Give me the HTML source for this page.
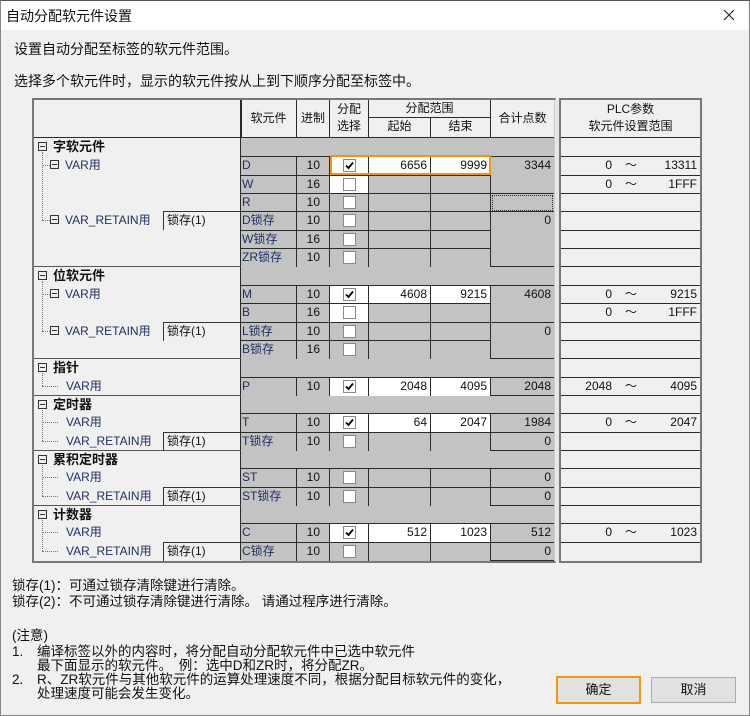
<!DOCTYPE html>
<html><head><meta charset="utf-8"><style>
*{margin:0;padding:0;box-sizing:border-box}
body{width:750px;height:716px;background:#f0f0f0;font-family:"Liberation Sans","Noto Sans CJK SC",sans-serif;font-size:12px;color:#111;position:relative;overflow:hidden}
.a{position:absolute;white-space:nowrap}
.r{position:absolute;left:241px;width:250px;height:19px}
.r span{position:absolute;top:0;height:19px;border-top:1px solid #2a2a2a;border-right:1px solid #2a2a2a;line-height:17px;background:#c3c3c3}
.l{left:0;width:56px;padding-left:1px;color:#203060}
.x{left:56px;width:33px;text-align:right;padding-right:9px}
.k{left:89px;width:39px}
.s{left:128px;width:62px;text-align:right;padding-right:3px}
.e{left:190px;width:60px;text-align:right;padding-right:3px}
.r span.w{background:#fff}
.cb{position:absolute;left:13px;top:2px;width:13px;height:13px;background:#fff;border:1px solid #888}
.cb svg{position:absolute;left:1px;top:1px}
.g{position:absolute;left:241px;width:313px;height:19px;background:#c3c3c3;border-top:1px solid #2a2a2a}
.t{position:absolute;left:491px;width:63px;background:#c3c3c3;border-top:1px solid #2a2a2a;text-align:right;padding-right:3px;line-height:17px}
.p{position:absolute;left:561px;width:139px;height:19px;border-top:1px solid #2a2a2a;line-height:17px}
.p b{font-weight:normal;position:absolute}
.gl{position:absolute;left:34px;width:207px;height:1px;background:#555}
.gh{position:absolute;left:38px;font-weight:bold;font-size:13px;line-height:18px}
.bx{display:inline-block;width:9px;height:9px;border:1px solid #333;position:relative;margin-right:6px;vertical-align:0}
.bx:after{content:"";position:absolute;left:1px;right:1px;top:3px;height:1px;background:#333}
.sub{position:absolute;color:#203060;line-height:18px}
.lk{position:absolute;left:163px;width:79px;height:19px;border-left:1px solid #333;border-top:1px solid #333;padding-left:3px;line-height:17px}
.vd{position:absolute;border-left:1px dotted #777}
.hd{position:absolute;border-top:1px dotted #777;width:10px}
.hc{position:absolute;top:100px;border-right:1px solid #2a2a2a;text-align:center;line-height:17px;background:#f0f0f0}
</style></head><body>
<div class="a" style="left:0;top:0;width:750px;height:716px;border:1px solid #888;border-top:1px solid #555"></div>
<div class="a" style="left:1px;top:1px;width:747px;height:29px;background:#fff"></div>
<div class="a" style="left:6px;top:6px;font-size:14px">自动分配软元件设置</div>
<svg class="a" style="left:723px;top:9px" width="12" height="12"><path d="M1 1L11 11M11 1L1 11" stroke="#222" stroke-width="1.1"/></svg>
<div class="a" style="left:14px;top:39px;font-size:14px">设置自动分配至标签的软元件范围。</div>
<div class="a" style="left:14px;top:71px;font-size:14px">选择多个软元件时，显示的软元件按从上到下顺序分配至标签中。</div>

<div class="a" style="left:32px;top:98px;width:524px;height:465px;border:2px solid #777;border-right:1px solid #bbb;border-bottom:2px solid #777"></div>
<div class="a" style="left:34px;top:100px;width:207px;height:460px;border-right:1px solid #2a2a2a"></div>
<div class="a" style="left:34px;top:137px;width:520px;height:1px;background:#2a2a2a"></div>
<div class="hc" style="left:241px;width:56px;height:37px;line-height:37px">软元件</div>
<div class="hc" style="left:297px;width:33px;height:37px;line-height:37px">进制</div>
<div class="hc" style="left:330px;width:39px;height:37px;padding-top:1px">分配<br>选择</div>
<div class="hc" style="left:369px;width:122px;height:18px;border-bottom:1px solid #2a2a2a">分配范围</div>
<div class="hc" style="left:369px;top:118px;width:62px;height:19px">起始</div>
<div class="hc" style="left:431px;top:118px;width:60px;height:19px">结束</div>
<div class="hc" style="left:491px;width:63px;height:37px;line-height:37px;border-right:none">合计点数</div>
<div class="a" style="left:241px;top:100px;width:1px;height:37px;background:#2a2a2a"></div>
<div class="a" style="left:554px;top:100px;width:6px;height:461px;background:#e6e6e6;border-left:1px solid #ccc"></div>

<div class="a" style="left:559px;top:98px;width:143px;height:465px;border:2px solid #777;border-bottom:2px solid #777"></div>
<div class="a" style="left:561px;top:100px;width:139px;height:37px;text-align:center;line-height:17px;padding-top:1px">PLC参数<br>软元件设置范围</div>

<div class="g" style="top:137px"></div>
<div class="g" style="top:266px"></div>
<div class="g" style="top:358px"></div>
<div class="g" style="top:395px"></div>
<div class="g" style="top:450px"></div>
<div class="g" style="top:505px"></div>
<div class="a" style="left:241px;top:560px;width:313px;height:1px;background:#2a2a2a"></div>

<div class="r" style="top:156px"><span class="l">D</span><span class="x">10</span><span class="k w"><i class="cb"><svg width="9" height="9"><path d="M1 4.5L3.5 7L8 1.5" stroke="#000" stroke-width="1.8" fill="none"/></svg></i></span><span class="s w">6656</span><span class="e w">9999</span></div>
<div class="r" style="top:175px"><span class="l">W</span><span class="x">16</span><span class="k w"><i class="cb"></i></span><span class="s"></span><span class="e"></span></div>
<div class="r" style="top:193px"><span class="l">R</span><span class="x">10</span><span class="k"><i class="cb"></i></span><span class="s"></span><span class="e"></span></div>
<div class="r" style="top:211px"><span class="l">D锁存</span><span class="x">10</span><span class="k"><i class="cb"></i></span><span class="s"></span><span class="e"></span></div>
<div class="r" style="top:230px"><span class="l">W锁存</span><span class="x">16</span><span class="k"><i class="cb"></i></span><span class="s"></span><span class="e"></span></div>
<div class="r" style="top:248px"><span class="l">ZR锁存</span><span class="x">10</span><span class="k"><i class="cb"></i></span><span class="s"></span><span class="e"></span></div>
<div class="r" style="top:285px"><span class="l">M</span><span class="x">10</span><span class="k w"><i class="cb"><svg width="9" height="9"><path d="M1 4.5L3.5 7L8 1.5" stroke="#000" stroke-width="1.8" fill="none"/></svg></i></span><span class="s w">4608</span><span class="e w">9215</span></div>
<div class="r" style="top:303px"><span class="l">B</span><span class="x">16</span><span class="k w"><i class="cb"></i></span><span class="s"></span><span class="e"></span></div>
<div class="r" style="top:322px"><span class="l">L锁存</span><span class="x">10</span><span class="k"><i class="cb"></i></span><span class="s"></span><span class="e"></span></div>
<div class="r" style="top:340px"><span class="l">B锁存</span><span class="x">16</span><span class="k"><i class="cb"></i></span><span class="s"></span><span class="e"></span></div>
<div class="r" style="top:377px"><span class="l">P</span><span class="x">10</span><span class="k w"><i class="cb"><svg width="9" height="9"><path d="M1 4.5L3.5 7L8 1.5" stroke="#000" stroke-width="1.8" fill="none"/></svg></i></span><span class="s w">2048</span><span class="e w">4095</span></div>
<div class="r" style="top:413px"><span class="l">T</span><span class="x">10</span><span class="k w"><i class="cb"><svg width="9" height="9"><path d="M1 4.5L3.5 7L8 1.5" stroke="#000" stroke-width="1.8" fill="none"/></svg></i></span><span class="s w">64</span><span class="e w">2047</span></div>
<div class="r" style="top:432px"><span class="l">T锁存</span><span class="x">10</span><span class="k"><i class="cb"></i></span><span class="s"></span><span class="e"></span></div>
<div class="r" style="top:468px"><span class="l">ST</span><span class="x">10</span><span class="k"><i class="cb"></i></span><span class="s"></span><span class="e"></span></div>
<div class="r" style="top:487px"><span class="l">ST锁存</span><span class="x">10</span><span class="k"><i class="cb"></i></span><span class="s"></span><span class="e"></span></div>
<div class="r" style="top:523px"><span class="l">C</span><span class="x">10</span><span class="k w"><i class="cb"><svg width="9" height="9"><path d="M1 4.5L3.5 7L8 1.5" stroke="#000" stroke-width="1.8" fill="none"/></svg></i></span><span class="s w">512</span><span class="e w">1023</span></div>
<div class="r" style="top:542px"><span class="l">C锁存</span><span class="x">10</span><span class="k"><i class="cb"></i></span><span class="s"></span><span class="e"></span></div>
<div class="a" style="left:330px;top:155px;width:161px;height:20px;border:2px solid #f29610"></div>

<div class="t" style="top:156px;height:37px">3344</div>
<div class="t" style="top:193px;height:18px"><div class="a" style="left:1px;top:1px;width:61px;height:16px;border:1px dotted #333"></div></div>
<div class="t" style="top:211px;height:55px">0</div>
<div class="t" style="top:285px;height:37px">4608</div>
<div class="t" style="top:322px;height:36px">0</div>
<div class="t" style="top:377px;height:18px">2048</div>
<div class="t" style="top:413px;height:19px">1984</div>
<div class="t" style="top:432px;height:18px">0</div>
<div class="t" style="top:468px;height:19px">0</div>
<div class="t" style="top:487px;height:18px">0</div>
<div class="t" style="top:523px;height:19px">512</div>
<div class="t" style="top:542px;height:18px">0</div>

<div class="p" style="top:137px"></div>
<div class="p" style="top:156px"><b style="right:88px">0</b><b style="left:64px">～</b><b style="right:3px">13311</b></div>
<div class="p" style="top:175px"><b style="right:88px">0</b><b style="left:64px">～</b><b style="right:3px">1FFF</b></div>
<div class="p" style="top:193px"></div><div class="p" style="top:211px"></div><div class="p" style="top:230px"></div><div class="p" style="top:248px"></div><div class="p" style="top:266px"></div>
<div class="p" style="top:285px"><b style="right:88px">0</b><b style="left:64px">～</b><b style="right:3px">9215</b></div>
<div class="p" style="top:303px"><b style="right:88px">0</b><b style="left:64px">～</b><b style="right:3px">1FFF</b></div>
<div class="p" style="top:322px"></div><div class="p" style="top:340px"></div><div class="p" style="top:358px"></div>
<div class="p" style="top:377px"><b style="right:88px">2048</b><b style="left:64px">～</b><b style="right:3px">4095</b></div>
<div class="p" style="top:395px"></div>
<div class="p" style="top:413px"><b style="right:88px">0</b><b style="left:64px">～</b><b style="right:3px">2047</b></div>
<div class="p" style="top:432px"></div><div class="p" style="top:450px"></div><div class="p" style="top:468px"></div><div class="p" style="top:487px"></div><div class="p" style="top:505px"></div>
<div class="p" style="top:523px"><b style="right:88px">0</b><b style="left:64px">～</b><b style="right:3px">1023</b></div>
<div class="p" style="top:542px"></div>

<div class="gl" style="top:266px"></div><div class="gl" style="top:358px"></div><div class="gl" style="top:395px"></div><div class="gl" style="top:450px"></div><div class="gl" style="top:505px"></div>
<div class="gh" style="top:138px"><i class="bx"></i>字软元件</div>
<div class="vd" style="left:42px;top:152px;height:68px"></div>
<div class="hd" style="left:42px;top:165px;width:8px"></div><div class="sub" style="left:50px;top:156px"><i class="bx"></i>VAR用</div>
<div class="hd" style="left:42px;top:220px;width:8px"></div><div class="sub" style="left:50px;top:211px"><i class="bx"></i>VAR_RETAIN用</div>
<div class="lk" style="top:211px">锁存(1)</div>

<div class="gh" style="top:267px"><i class="bx"></i>位软元件</div>
<div class="vd" style="left:42px;top:281px;height:50px"></div>
<div class="hd" style="left:42px;top:294px;width:8px"></div><div class="sub" style="left:50px;top:285px"><i class="bx"></i>VAR用</div>
<div class="hd" style="left:42px;top:331px;width:8px"></div><div class="sub" style="left:50px;top:322px"><i class="bx"></i>VAR_RETAIN用</div>
<div class="lk" style="top:322px">锁存(1)</div>

<div class="gh" style="top:359px"><i class="bx"></i>指针</div>
<div class="vd" style="left:42px;top:373px;height:13px"></div>
<div class="hd" style="left:42px;top:386px;width:16px"></div><div class="sub" style="left:66px;top:377px">VAR用</div>

<div class="gh" style="top:396px"><i class="bx"></i>定时器</div>
<div class="vd" style="left:42px;top:410px;height:31px"></div>
<div class="hd" style="left:42px;top:422px;width:16px"></div><div class="sub" style="left:66px;top:413px">VAR用</div>
<div class="hd" style="left:42px;top:441px;width:16px"></div><div class="sub" style="left:66px;top:432px">VAR_RETAIN用</div>
<div class="lk" style="top:432px">锁存(1)</div>

<div class="gh" style="top:451px"><i class="bx"></i>累积定时器</div>
<div class="vd" style="left:42px;top:465px;height:31px"></div>
<div class="hd" style="left:42px;top:477px;width:16px"></div><div class="sub" style="left:66px;top:468px">VAR用</div>
<div class="hd" style="left:42px;top:496px;width:16px"></div><div class="sub" style="left:66px;top:487px">VAR_RETAIN用</div>
<div class="lk" style="top:487px">锁存(1)</div>

<div class="gh" style="top:506px"><i class="bx"></i>计数器</div>
<div class="vd" style="left:42px;top:520px;height:31px"></div>
<div class="hd" style="left:42px;top:532px;width:16px"></div><div class="sub" style="left:66px;top:523px">VAR用</div>
<div class="hd" style="left:42px;top:551px;width:16px"></div><div class="sub" style="left:66px;top:542px">VAR_RETAIN用</div>
<div class="lk" style="top:542px">锁存(1)</div>

<div class="a" style="left:12px;top:578px;line-height:16px;font-size:13.5px">锁存(1)：可通过锁存清除键进行清除。<br>锁存(2)：不可通过锁存清除键进行清除。 请通过程序进行清除。</div>
<div class="a" style="left:12px;top:629px;line-height:14px;font-size:13.5px">(注意)</div>
<div class="a" style="left:12px;top:645px;line-height:14px;font-size:13.5px">1.<br><br>2.</div>
<div class="a" style="left:37px;top:645px;line-height:14px;font-size:13.5px">编译标签以外的内容时，将分配自动分配软元件中已选中软元件<br>最下面显示的软元件。　例：选中D和ZR时，将分配ZR。<br>R、ZR软元件与其他软元件的运算处理速度不同，根据分配目标软元件的变化，<br>处理速度可能会发生变化。</div>
<div class="a" style="left:556px;top:676px;width:85px;height:28px;border:2px solid #f29610;background:#e1e1e1;text-align:center;line-height:24px;font-size:13px">确定</div>
<div class="a" style="left:651px;top:677px;width:85px;height:26px;border:1px solid #adadad;background:#e1e1e1;text-align:center;line-height:24px;font-size:13px">取消</div>
</body></html>
